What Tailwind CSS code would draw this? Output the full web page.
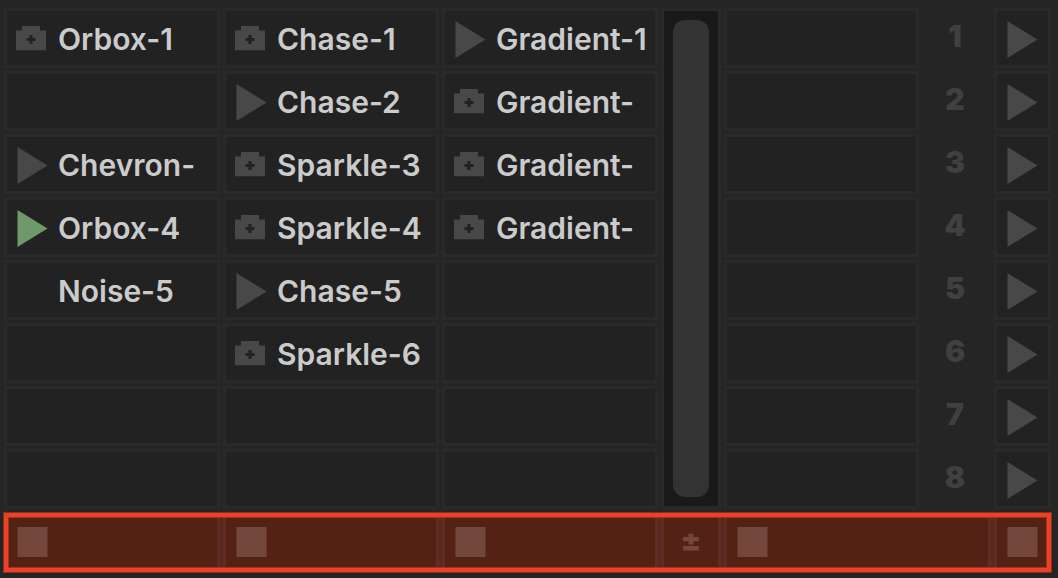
<!DOCTYPE html>
<html lang="en">
<head>
    <meta charset="UTF-8">
    <meta name="viewport" content="width=device-width, initial-scale=1.0">
    <title>Clip Launcher</title>
    <script src="https://cdn.jsdelivr.net/npm/@tailwindcss/browser@4"></script>
</head>
<body class="min-h-screen bg-[#252525] font-['Inter',sans-serif] text-[#cbcbcb]">
    <main class="pt-2 pl-1 pr-[7px]">
        <div id="clips" class="grid grid-cols-[minmax(0,216fr)_minmax(0,216fr)_minmax(0,216fr)_minmax(0,60fr)_minmax(0,195fr)_minmax(0,69fr)_minmax(0,57fr)] auto-rows-[60px] gap-[3px]"></div>

        <div class="relative mt-[3px]">
            <div id="stops" class="grid grid-cols-[minmax(0,216fr)_minmax(0,216fr)_minmax(0,216fr)_minmax(0,60fr)_minmax(0,267fr)_minmax(0,57fr)] auto-rows-[60px] gap-[3px] bg-[#5a281f]"></div>
            <div class="pointer-events-none absolute inset-x-0 top-px bottom-0 border-4 border-[#ec4126] shadow-[0_0_0_1px_#892f20,inset_0_0_0_1px_#a03220]"></div>
        </div>
    </main>

    <script>
        const clips = document.getElementById('clips');
        const stops = document.getElementById('stops');

        // [icon, name] per column, null for an empty slot
        const rows = [
            [['add', 'Orbox-1'], ['add', 'Chase-1'], ['play', 'Gradient-1']],
            [null, ['play', 'Chase-2'], ['add', 'Gradient-']],
            [['play', 'Chevron-'], ['add', 'Sparkle-3'], ['add', 'Gradient-']],
            [['active', 'Orbox-4'], ['add', 'Sparkle-4'], ['add', 'Gradient-']],
            [['none', 'Noise-5'], ['play', 'Chase-5'], null],
            [null, ['add', 'Sparkle-6'], null],
            [null, null, null],
            [null, null, null]
        ];

        const icons = {
            add: '<path fill="#484848" fill-rule="evenodd" d="M6 5h18v4.400h6v19.900H0V9.400h6zM13.400 14v2.900h-2.900v3.200h2.900v2.900h3.200v-2.900h2.900v-3.200h-2.900v-2.900z"/>',
            play: '<path fill="#484848" d="M1.500 0L31.500 18.500L1.500 37z"/>',
            active: '<path fill="#6f986b" d="M1.500 0L31.500 18.500L1.500 37z"/>',
            none: ''
        };

        const cellClass = 'flex items-start overflow-hidden border-3 border-[#292929] bg-[#222222] pt-[10px] text-left';

        function icon(name) {
            return `<svg class="h-[38px] w-8 shrink-0" viewBox="0 0 32 38" aria-hidden="true">${icons[name]}</svg>`;
        }

        function clipCell(clip) {
            if (!clip) {
                return `<button type="button" aria-label="Empty slot" class="${cellClass}"></button>`;
            }
            return `
                <button type="button" class="${cellClass} gap-[10px] pl-[9px]">
                    ${icon(clip[0])}
                    <span class="text-[30px] leading-9 font-semibold whitespace-nowrap">${clip[1]}</span>
                </button>
            `;
        }

        function stopCell(label) {
            return `
                <div class="flex items-start border-x-3 border-[#602c24] bg-[#532215] pt-[15px] pl-[10px]">
                    <button type="button" aria-label="${label}" class="h-[30px] w-[31px] border-x border-[#64352b] bg-[#74473c]"></button>
                </div>
            `;
        }

        clips.innerHTML = rows.map((row, i) => `
            ${row.map(clipCell).join('')}
            ${i === 0 ? `
                <div class="row-span-8 border-3 border-[#292929] bg-[#191919] p-[9px]">
                    <input type="range" aria-label="Crossfade" value="100"
                           class="block h-full w-full appearance-none rounded-xl bg-[#333333] [&::-webkit-slider-thumb]:appearance-none">
                </div>
            ` : ''}
            ${clipCell(null)}
            <div class="pt-[10px] pr-[3px] text-center text-[30px] leading-9 font-black text-[#404040]">${i + 1}</div>
            <button type="button" aria-label="Play row ${i + 1}" class="${cellClass} pl-[9px]">${icon('play')}</button>
        `).join('');

        stops.innerHTML = `
            ${stopCell('Stop column 1')}
            ${stopCell('Stop column 2')}
            ${stopCell('Stop column 3')}
            <button type="button" class="border-x-3 border-[#602c24] bg-[#532215] pb-1 text-[30px] leading-9 font-black text-[#74473c]">±</button>
            ${stopCell('Stop column 4')}
            ${stopCell('Stop all')}
        `;
    </script>
</body>
</html>
